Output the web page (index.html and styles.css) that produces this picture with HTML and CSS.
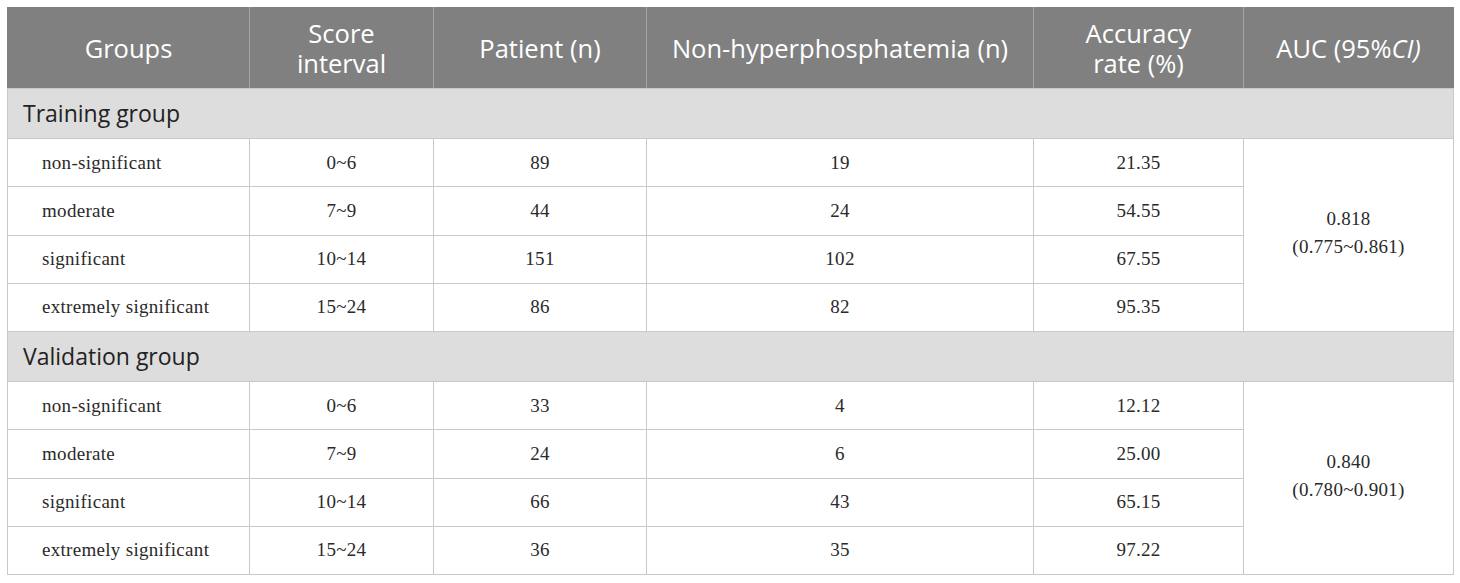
FILE: index.html
```html
<!DOCTYPE html>
<html>
<head>
<meta charset="utf-8">
<link rel="stylesheet" href="styles.css">
</head>
<body>
<table class="tbl">
  <colgroup>
    <col class="c1"><col class="c2"><col class="c3"><col class="c4"><col class="c5"><col class="c6">
  </colgroup>
  <thead>
    <tr class="head">
      <th>Groups</th>
      <th>Score<br>interval</th>
      <th>Patient (n)</th>
      <th>Non-hyperphosphatemia (n)</th>
      <th>Accuracy<br>rate (%)</th>
      <th>AUC (95%<i>CI)</i></th>
    </tr>
  </thead>
  <tbody>
    <tr class="section"><td colspan="6">Training group</td></tr>
    <tr class="row">
      <td class="name">non-significant</td><td>0~6</td><td>89</td><td>19</td><td>21.35</td>
      <td class="auc" rowspan="4">0.818<br>(0.775~0.861)</td>
    </tr>
    <tr class="row"><td class="name">moderate</td><td>7~9</td><td>44</td><td>24</td><td>54.55</td></tr>
    <tr class="row"><td class="name">significant</td><td>10~14</td><td>151</td><td>102</td><td>67.55</td></tr>
    <tr class="row"><td class="name">extremely significant</td><td>15~24</td><td>86</td><td>82</td><td>95.35</td></tr>
    <tr class="section"><td colspan="6">Validation group</td></tr>
    <tr class="row">
      <td class="name">non-significant</td><td>0~6</td><td>33</td><td>4</td><td>12.12</td>
      <td class="auc" rowspan="4">0.840<br>(0.780~0.901)</td>
    </tr>
    <tr class="row"><td class="name">moderate</td><td>7~9</td><td>24</td><td>6</td><td>25.00</td></tr>
    <tr class="row"><td class="name">significant</td><td>10~14</td><td>66</td><td>43</td><td>65.15</td></tr>
    <tr class="row"><td class="name">extremely significant</td><td>15~24</td><td>36</td><td>35</td><td>97.22</td></tr>
  </tbody>
</table>
</body>
</html>
```
FILE: styles.css
```css
html, body {
  margin: 0;
  padding: 0;
  background: #ffffff;
}
body {
  padding: 7px 0 0 7px;
}
.tbl {
  border-collapse: collapse;
  table-layout: fixed;
  width: 1446px;
  font-family: "Liberation Serif", "Times New Roman", serif;
  font-size: 19px;
  letter-spacing: 0.3px;
  color: #2a2a2a;
}
.c1 { width: 242px; }
.c2 { width: 184px; }
.c3 { width: 213px; }
.c4 { width: 387px; }
.c5 { width: 210px; }
.c6 { width: 210px; }
.tbl td {
  border: 1px solid #c9c9c9;
  text-align: center;
  vertical-align: middle;
  padding: 0;
}
.head th {
  background: #7f807f;
  color: #ffffff;
  font-family: "Open Sans", "Liberation Sans", sans-serif;
  font-weight: 400;
  font-size: 25.5px;
  letter-spacing: 0;
  line-height: 30px;
  height: 80px;
  padding: 0 2px;
  border: 1px solid #a3a3a3;
  border-top-color: #7f807f;
  border-bottom-color: #c9c9c9;
  text-align: center;
  vertical-align: middle;
}
.head th:first-child { border-left-color: #7f807f; }
.head th:last-child { border-right-color: #7f807f; }
.head th i { font-style: italic; }
.section td {
  background: #dddddd;
  font-family: "Open Sans", "Liberation Sans", sans-serif;
  font-size: 23px;
  letter-spacing: 0;
  color: #222222;
  text-align: left;
  height: 47px;
  padding: 0 0 2px 15px;
}
.row td {
  height: 47.25px;
}
.row td.name {
  text-align: left;
  padding-left: 34px;
}
.row td.auc {
  line-height: 28px;
  padding-bottom: 4px;
}
```
